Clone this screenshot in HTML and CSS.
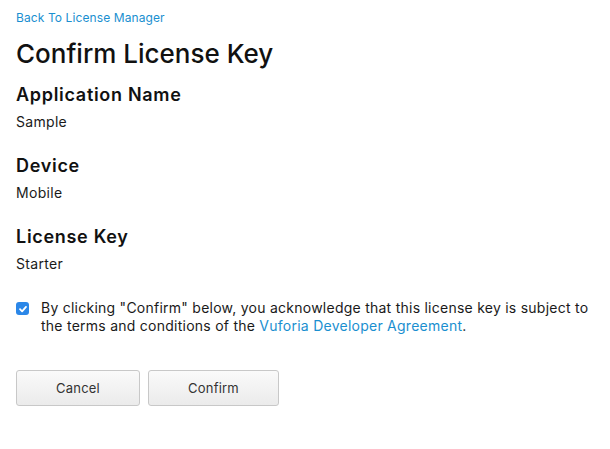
FILE: index.html
```html
<!DOCTYPE html>
<html>
<head>
<meta charset="utf-8">
<link rel="stylesheet" href="styles.css">
</head>
<body>
<main class="page">
  <a class="back" href="#">Back To License Manager</a>
  <h1 class="title">Confirm License Key</h1>
  <section class="field">
    <h2 class="label">Application Name</h2>
    <p class="value">Sample</p>
  </section>
  <section class="field">
    <h2 class="label">Device</h2>
    <p class="value">Mobile</p>
  </section>
  <section class="field">
    <h2 class="label">License Key</h2>
    <p class="value">Starter</p>
  </section>
  <label class="agree">
    <span class="box"><svg viewBox="0 0 12 12" width="12" height="12"><path d="M3 6.2 L5.1 8.3 L9 3.9" fill="none" stroke="#fff" stroke-width="1.8" stroke-linecap="round" stroke-linejoin="round"/></svg></span>
    <span class="agree-text">By clicking "Confirm" below, you acknowledge that this license key is subject to the terms and conditions of the <a href="#">Vuforia Developer Agreement</a>.</span>
  </label>
  <div class="actions">
    <button class="btn btn-cancel">Cancel</button>
    <button class="btn btn-confirm">Confirm</button>
  </div>
</main>
</body>
</html>
```

FILE: styles.css
```css
* { box-sizing: border-box; }
html, body { margin: 0; padding: 0; background: #fff; }
body {
  font-family: Inter, Roboto, "Noto Sans", sans-serif;
  color: #111;
}
.page {
  padding: 10px 16px 0 16px;
  display: flex;
  flex-direction: column;
  align-items: flex-start;
}
.back {
  color: #1a8fd0;
  text-decoration: none;
  font-size: 12px;
  line-height: 15px;
  letter-spacing: 0.1px;
}
.title {
  margin: 14px 0 0 0;
  font-size: 26px;
  line-height: 30px;
  font-weight: 500;
  color: #111;
}
.field { margin: 0; }
.field:first-of-type { margin-top: 15px; }
.field + .field { margin-top: 24px; }
.label {
  margin: 0;
  font-size: 18px;
  line-height: 22px;
  font-weight: 600;
  letter-spacing: 0.7px;
}
.value {
  margin: 7px 0 0 0;
  font-size: 14px;
  line-height: 18px;
  letter-spacing: 0.3px;
  color: #1a1a1a;
}
.agree {
  margin-top: 26px;
  display: flex;
  gap: 12px;
  align-items: flex-start;
  font-size: 14px;
  line-height: 18px;
  letter-spacing: 0.25px;
  color: #1a1a1a;
}
.box {
  flex: none;
  width: 13px;
  height: 13px;
  margin-top: 3px;
  border-radius: 3px;
  background: #2b87e8;
  display: flex;
  align-items: center;
  justify-content: center;
}
.agree-text a { color: #1a8fd0; text-decoration: none; }
.actions {
  margin-top: 35px;
  display: flex;
  gap: 8px;
}
.btn {
  height: 36px;
  border: 1px solid #c8c8c8;
  border-radius: 3px;
  background: linear-gradient(#fafafa, #ebebeb);
  font-family: Inter, Roboto, "Noto Sans", sans-serif;
  font-size: 13px;
  letter-spacing: 0.2px;
  color: #333;
  padding: 0;
}
.btn-cancel { width: 124px; }
.btn-confirm { width: 131px; }
```
